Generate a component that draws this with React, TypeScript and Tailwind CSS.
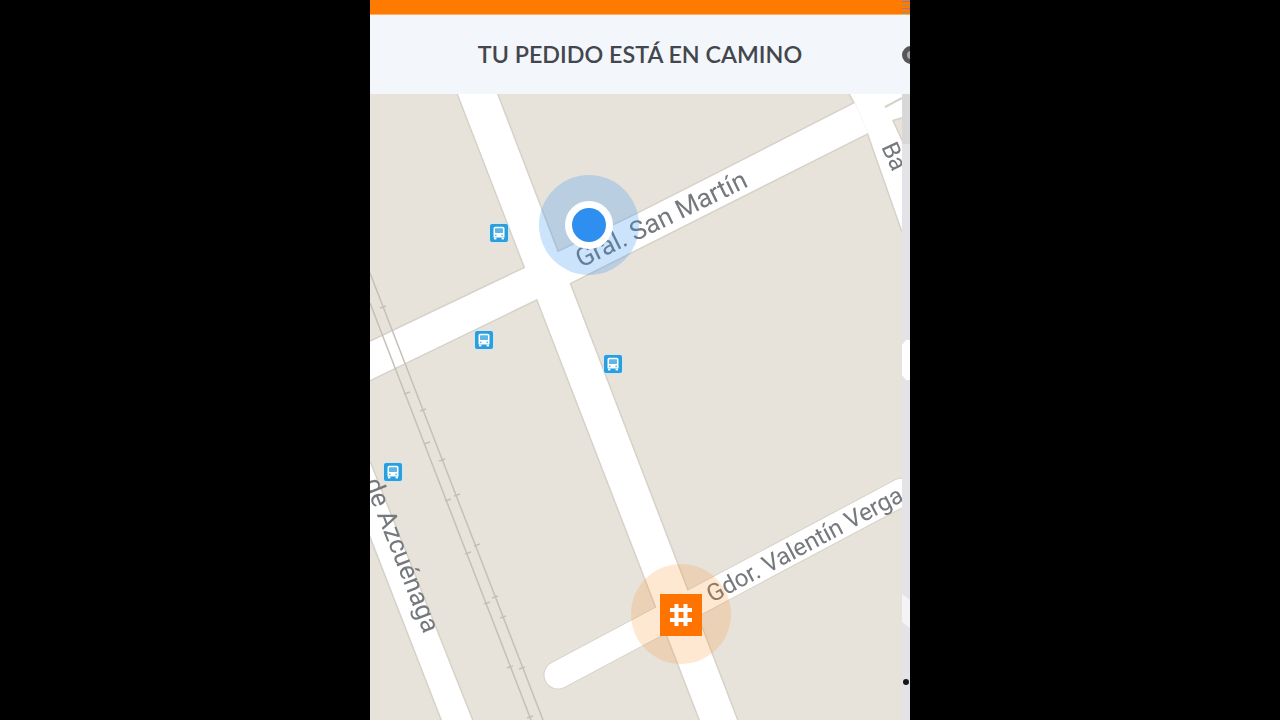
const mainRoad = "458,94 497,94 737,720 700,720";
const sanMartin = "370,342 525,268 637,214 720,172 855,103 868,133 570,283 370,380";
const barRoad = "850,94 902,94 902,117 892,120 902,142 902,230 868,133 855,103";
const azcuenaga = "370,463 472,720 442,720 370,535";

const railA: [number, number][] = [[407, 393], [427, 443], [448, 500], [468, 553], [487, 603], [510, 667], [530, 717]];
const railB: [number, number][] = [[383, 307], [423, 410], [442, 460], [457, 495], [477, 545], [495, 597], [503, 617], [522, 668]];

function Bus({ x, y }: { x: number; y: number }) {
  return (
    <g transform={`translate(${x - 10} ${y - 10})`}>
      <rect x="0" y="0" width="20" height="20" rx="3" fill="#cfe6f3" />
      <rect x="1" y="1" width="18" height="18" rx="2" fill="#2a9fdd" />
      <path d="M4.5 5.5A1.8 1.8 0 0 1 6.3 3.7h7.4a1.8 1.8 0 0 1 1.8 1.8V14.6h-11Z" fill="#ffffff" />
      <rect x="6" y="5.3" width="8" height="4.6" rx=".6" fill="#5cb6e6" />
      <rect x="5" y="14.6" width="2.4" height="1.8" fill="#ffffff" />
      <rect x="12.6" y="14.6" width="2.4" height="1.8" fill="#ffffff" />
      <circle cx="6.8" cy="12.3" r=".9" fill="#5cb6e6" />
      <circle cx="13.2" cy="12.3" r=".9" fill="#5cb6e6" />
    </g>
  );
}

export default function App() {
  return (
    <div className="flex h-screen w-full justify-center overflow-hidden bg-black font-['Lato','Liberation_Sans',sans-serif]">
      <div className="flex h-[720px] w-[540px] flex-col">
        <div className="flex h-[15px] shrink-0 justify-end border-b border-[#ffb060] bg-[#ff7a00]">
          <div className="flex w-2 flex-col justify-between py-px">
            <div className="h-px bg-[#8a7ab0]" />
            <div className="h-px bg-[#7fa080]" />
            <div className="h-px bg-[#a070b0]" />
            <div className="h-px bg-[#70a090]" />
          </div>
        </div>
        <div className="relative flex h-[79px] shrink-0 items-center justify-center overflow-hidden bg-[#f3f6fa]">
          <h1 className="text-[23.3px] font-semibold text-[#43464d]">TU PEDIDO ESTÁ EN CAMINO</h1>
          <div className="absolute right-[-10px] top-[31px] h-[18px] w-[18px] rounded-full border-[5px] border-[#55555a] bg-[#a8a8a8]" />
        </div>
        <div className="relative min-h-0 flex-1 overflow-hidden bg-[#e7e3db]">
          <svg viewBox="370 94 540 626" className="block h-full w-full blur-[0.5px]">
            <rect x="370" y="94" width="540" height="626" fill="#e7e3db" />
            {/* road casings */}
            <g fill="none" stroke="#d6d2c8" strokeWidth="3" strokeLinejoin="round">
              <polygon points={mainRoad} />
              <polygon points={sanMartin} />
              <polygon points={barRoad} />
              <polygon points={azcuenaga} />
            </g>
            <line x1="558" y1="675" x2="902" y2="492" stroke="#d6d2c8" strokeWidth="29" strokeLinecap="round" />
            {/* road fills */}
            <g fill="#ffffff">
              <polygon points={sanMartin} />
              <polygon points={barRoad} />
              <polygon points={azcuenaga} />
            </g>
            <line x1="558" y1="675" x2="902" y2="492" stroke="#ffffff" strokeWidth="27" strokeLinecap="round" />
            <polygon points={mainRoad} fill="#ffffff" />
            <line x1="885" y1="107" x2="902" y2="98" stroke="#d6d2c8" strokeWidth="2" />

            {/* railway */}
            <g stroke="#c4c0b7" strokeWidth="1.5" fill="none">
              <line x1="370" y1="303" x2="538" y2="738" />
              <line x1="370" y1="273" x2="550" y2="738" />
              {railA.map(([x, y]) => (
                <line key={`a${x}`} x1={x - 3} y1={y + 1} x2={x + 3} y2={y - 1} />
              ))}
              {railB.map(([x, y]) => (
                <line key={`b${x}`} x1={x - 3} y1={y + 1} x2={x + 3} y2={y - 1} />
              ))}
            </g>

            <g fontFamily="Roboto, 'Liberation Sans', sans-serif" fill="#75787c">
              <text transform="translate(581 268) rotate(-26)" fontSize="26.2">Gral. San Martín</text>
              <text transform="translate(712 603) rotate(-28)" fontSize="24.2">Gdor. Valentín Verga</text>
              <text transform="translate(364 482) rotate(68.5)" fontSize="26">de Azcuénaga</text>
              <text transform="translate(881 147) rotate(65)" fontSize="24">Ba</text>
            </g>

            <Bus x={499} y={233} />
            <Bus x={484} y={340} />
            <Bus x={613} y={364} />
            <Bus x={393} y={472} />

            <circle cx="589" cy="225" r="50" fill="#2f8ff0" fillOpacity="0.25" />
            <circle cx="589" cy="225" r="24" fill="#ffffff" />
            <circle cx="589" cy="225" r="17" fill="#2f8ff0" />

            <circle cx="681" cy="614" r="50" fill="#ff8a1e" fillOpacity="0.2" />

            {/* right strip */}
            <rect x="902" y="94" width="8" height="626" fill="#e3e3e8" />
            <rect x="902" y="94" width="8" height="50" fill="#d8d8d8" />
            <polygon points="902,345 906,340 910,340 910,380 906,380 902,375" fill="#ffffff" />
            <polygon points="902,594 910,600 910,628 902,622" fill="#f4f4f6" />
            <circle cx="906" cy="682" r="3" fill="#15151f" />
          </svg>
          <div className="absolute left-[290px] top-[500px] flex h-[42px] w-[42px] items-center justify-center bg-[#ff7300]">
            <svg viewBox="0 0 24 24" className="h-6 w-6 blur-[0.4px]" stroke="#ffffff" strokeWidth="4" fill="none">
              <path d="M7.5 1V23M16.5 1V23M1 7H23M1 17H23" />
            </svg>
          </div>
        </div>
      </div>
    </div>
  );
}
